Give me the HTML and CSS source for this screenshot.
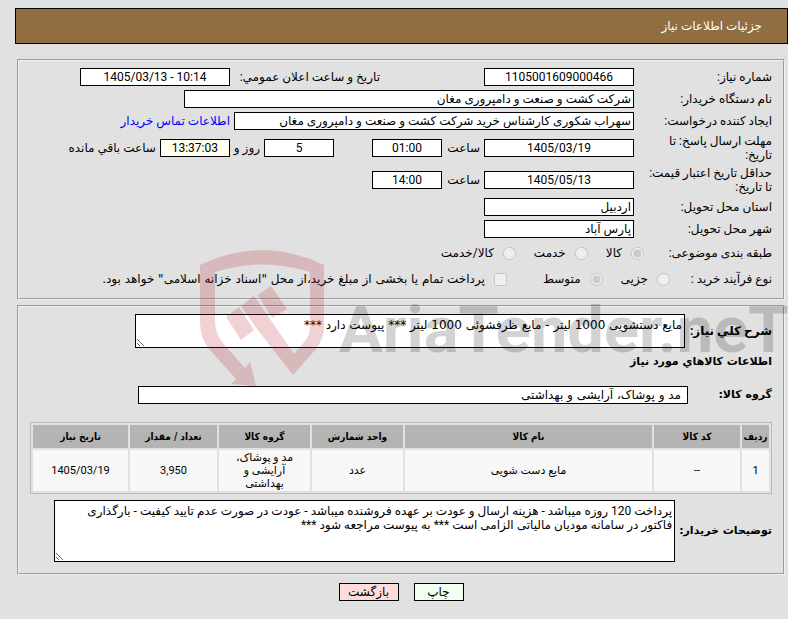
FILE: index.html
```
<!DOCTYPE html>
<html lang="fa" dir="rtl">
<head>
    <meta charset="UTF-8">
    <title>جزئیات اطلاعات نیاز</title>
    <link rel="stylesheet" href="styles.css">
</head>
<body>
    <h1 class="page-title">جزئیات اطلاعات نیاز</h1>

    <form class="need-form">
        <fieldset class="box">
            <div class="row">
                <label class="caption" for="needNo">شماره نیاز:</label>
                <input class="field medium center" type="text" id="needNo" value="1105001609000466" readonly>
                <label class="second-caption" for="announceDate">تاریخ و ساعت اعلان عمومي:</label>
                <input class="field medium center" dir="ltr" type="text" id="announceDate" value="1405/03/13 - 10:14" readonly>
            </div>
            <div class="row">
                <label class="caption" for="buyerOrg">نام دستگاه خریدار:</label>
                <input class="field large" type="text" id="buyerOrg" value="شرکت کشت و صنعت و دامپروری مغان" readonly>
            </div>
            <div class="row">
                <label class="caption" for="creator">ایجاد کننده درخواست:</label>
                <input class="field wide" type="text" id="creator" value="سهراب شکوری کارشناس خرید شرکت کشت و صنعت و دامپروری مغان" readonly>
                <a class="contact" href="#">اطلاعات تماس خریدار</a>
            </div>
            <div class="row double">
                <label class="caption" for="replyDate">مهلت ارسال پاسخ: تا تاریخ:</label>
                <input class="field medium center" type="text" id="replyDate" value="1405/03/19" readonly>
                <label class="hour" for="replyTime">ساعت</label>
                <input class="field small center" type="text" id="replyTime" value="01:00" readonly>
                <input class="field small center days" type="text" id="daysLeft" value="5" readonly>
                <label class="days-caption" for="daysLeft">روز و</label>
                <input class="field small center timer" type="text" id="timeLeft" value="13:37:03" readonly>
                <label for="timeLeft">ساعت باقي مانده</label>
            </div>
            <div class="row double">
                <label class="caption" for="priceDate">حداقل تاریخ اعتبار قیمت: تا تاریخ:</label>
                <input class="field medium center" type="text" id="priceDate" value="1405/05/13" readonly>
                <label class="hour" for="priceTime">ساعت</label>
                <input class="field small center" type="text" id="priceTime" value="14:00" readonly>
            </div>
            <div class="row">
                <label class="caption" for="province">استان محل تحویل:</label>
                <input class="field medium" type="text" id="province" value="اردبیل" readonly>
            </div>
            <div class="row">
                <label class="caption" for="city">شهر محل تحویل:</label>
                <input class="field medium" type="text" id="city" value="پارس آباد" readonly>
            </div>
            <div class="row options">
                <span class="caption subject">طبقه بندی موضوعی:</span>
                <label class="option"><input type="radio" name="subject" checked disabled>کالا</label>
                <label class="option"><input type="radio" name="subject" disabled>خدمت</label>
                <label class="option"><input type="radio" name="subject" disabled>کالا/خدمت</label>
            </div>
            <div class="row options">
                <span class="caption process">نوع فرآیند خرید :</span>
                <label class="option"><input type="radio" name="process" disabled>جزیی</label>
                <label class="option"><input type="radio" name="process" checked disabled>متوسط</label>
                <label class="option treasury"><input type="checkbox" disabled>پرداخت تمام یا بخشی از مبلغ خرید،از محل "اسناد خزانه اسلامی" خواهد بود.</label>
            </div>
        </fieldset>

        <fieldset class="box goods">
            <div class="area-row">
                <label class="summary-caption" for="summary">شرح کلي نیاز:</label>
                <textarea class="field summary" id="summary" readonly>مایع دستشویی 1000 لیتر - مایع ظرفشوئی 1000 لیتر *** پیوست دارد ***</textarea>
            </div>
            <h2 class="subtitle">اطلاعات کالاهاي مورد نیاز</h2>
            <div class="area-row">
                <label class="group-caption" for="goodsGroup">گروه کالا:</label>
                <input class="field group" type="text" id="goodsGroup" value="مد و پوشاک، آرایشی و بهداشتی" readonly>
            </div>
            <table class="items">
                <colgroup>
                    <col class="col-row">
                    <col class="col-code">
                    <col>
                    <col class="col-unit">
                    <col class="col-group">
                    <col class="col-count">
                    <col class="col-date">
                </colgroup>
                <thead>
                    <tr>
                        <th>ردیف</th>
                        <th>کد کالا</th>
                        <th>نام کالا</th>
                        <th>واحد شمارش</th>
                        <th>گروه کالا</th>
                        <th>تعداد / مقدار</th>
                        <th>تاریخ نیاز</th>
                    </tr>
                </thead>
                <tbody>
                    <tr>
                        <td>1</td>
                        <td>--</td>
                        <td>مایع دست شویی</td>
                        <td>عدد</td>
                        <td>مد و پوشاک، آرایشی و بهداشتی</td>
                        <td>3,950</td>
                        <td>1405/03/19</td>
                    </tr>
                </tbody>
            </table>
            <div class="area-row">
                <label for="notes">توضیحات خریدار:</label>
                <textarea class="field notes" id="notes" readonly>پرداخت 120 روزه میباشد - هزینه ارسال و عودت بر عهده فروشنده میباشد - عودت در صورت عدم تایید کیفیت - بارگذاری فاکتور در سامانه مودیان مالیاتی الزامی است *** به پیوست مراجعه شود ***</textarea>
            </div>
        </fieldset>

        <div class="buttons">
            <button class="btn print" type="button">چاپ</button>
            <button class="btn back" type="button">بازگشت</button>
        </div>
    </form>

    <svg class="watermark" width="588" height="140" viewBox="0 0 588 140" direction="ltr">
        <path class="mark" fill-rule="evenodd" d="M0 15 Q62 -15 124 15 V78 Q124 88 116 99 L93 125 L57 79 L70 69 L94 104 L105 91 Q110 85 110 77 V22 Q62 7 15 22 V72 Q15 82 22 92 L45 118 L50 112 L56 136 L31 134 L36 129 L10 100 Q0 89 0 72 Z M26 67 L39 57 L54 80 L41 90 Z M41 56 L54 46 L70 69 L57 79 Z M58 45 L71 36 L87 59 L72 68 Z"/>
        <text class="brand" x="139" y="102">AriaTender.neT</text>
    </svg>
</body>
</html>
```
FILE: styles.css
```
body {
    position: relative;
    margin: 0;
    padding: 8px 0 17px 15px;
    box-sizing: border-box;
    background-color: #e1e1e1;
    color: #000;
    font-family: Roboto, "DejaVu Sans", Tahoma, sans-serif;
    font-size: 12px;
    line-height: 14px;
    overflow-x: hidden;
}

.page-title {
    margin: 0;
    padding: 10px 25px;
    border: 1px solid #000;
    background-color: #906e41;
    color: #fff;
    font-size: 12px;
    font-weight: normal;
    line-height: 14px;
}

.need-form {
    margin: 15px 3px 0 2px;
}

.box {
    margin: 0 0 5px;
    padding: 5px 11px 6px;
    border: 2px groove #f0f0f0;
    min-width: 0;
}

.row {
    display: flex;
    align-items: center;
    gap: 4px;
    height: 22px;
    white-space: nowrap;
}

.row.double {
    height: 32px;
}

.row.options {
    height: 26px;
}

.caption {
    flex: 0 0 134px;
    box-sizing: border-box;
    padding-left: 8px;
    white-space: normal;
}

.caption.subject {
    flex-basis: 124px;
}

.caption.process {
    flex-basis: 98px;
    padding-left: 0;
}

.field {
    box-sizing: border-box;
    height: 18px;
    margin: 0;
    padding: 0 2px;
    border: 1px solid #000;
    border-radius: 0;
    background-color: #fff;
    color: #000;
    font-family: inherit;
    font-size: 12px;
    line-height: 14px;
}

.center {
    text-align: center;
}

.small {
    width: 70px;
}

.medium {
    width: 150px;
}

.wide {
    width: 400px;
}

.large {
    width: 450px;
}

.hour {
    flex: 0 0 34px;
}

.second-caption {
    flex: 0 0 146px;
    margin-right: 100px;
}

.days {
    margin-right: 34px;
}

.days-caption {
    flex: 0 0 26px;
}

.timer {
    background-color: #fffff0;
}

.contact {
    color: #00f;
    text-decoration: none;
}

.option {
    display: flex;
    align-items: center;
    gap: 9px;
    margin-left: 14px;
}

.option input {
    width: 13px;
    height: 13px;
    margin: 0;
}

.treasury {
    margin-right: 18px;
}

.treasury,
.field.summary,
.field.group {
    font-family: "DejaVu Sans", Tahoma, sans-serif;
}

/* goods section */
.goods {
    padding: 7px 11px 11px;
}

.area-row {
    display: flex;
    align-items: center;
    gap: 4px;
}

.area-row label,
.subtitle {
    font-family: "DejaVu Sans", Tahoma, sans-serif;
    font-size: 11px;
    font-weight: bold;
    white-space: nowrap;
}

.subtitle {
    margin: 7px 0 17px;
    line-height: 14px;
}

.area-row .summary-caption {
    flex: 0 0 83px;
    font-family: Roboto, "DejaVu Sans", Tahoma, sans-serif;
    font-size: 12px;
}

.group-caption {
    flex: 0 0 80px;
}

.group {
    width: 550px;
    padding-right: 6px;
}

textarea.field {
    resize: both;
    overflow: hidden;
}

.summary {
    width: 550px;
    height: 34px;
    padding: 3px 2px;
}

.notes {
    width: 621px;
    height: 62px;
    padding: 3px 2px;
}

.items {
    width: 100%;
    margin: 18px 0 6px;
    border: 1px solid #bbb;
    border-collapse: separate;
    border-spacing: 2px;
    table-layout: fixed;
    font-size: 11px;
    line-height: 13px;
    text-align: center;
}

.items th {
    height: 23px;
    padding: 0;
    background-color: #b4b4b4;
    font-family: "DejaVu Sans Condensed", Tahoma, sans-serif;
    font-size: 10px;
}

.items td {
    height: 41px;
    padding: 0 10px;
    background-color: #f7f7f7;
}

.items th:first-child,
.items td:first-child {
    padding: 0;
}

.col-row {
    width: 27px;
}

.col-code {
    width: 86px;
}

.col-unit {
    width: 91px;
}

.col-group {
    width: 91px;
}

.col-count {
    width: 87px;
}

.col-date {
    width: 95px;
}

.buttons {
    display: flex;
    justify-content: center;
    gap: 15px;
    margin-top: 8px;
}

.btn {
    height: 18px;
    padding: 0;
    border: 1px solid #000;
    border-radius: 0;
    color: #000;
    font-family: inherit;
    font-size: 12px;
    line-height: 14px;
}

.print {
    width: 50px;
    background-color: #f0fff0;
}

.back {
    width: 60px;
    background-color: #ffdcdc;
}

/* site mark over the form */
.watermark {
    position: absolute;
    top: 250px;
    left: 200px;
    pointer-events: none;
}

.mark {
    fill: #b40f19;
    opacity: 0.19;
}

.brand {
    fill: #000;
    opacity: 0.17;
    font-family: Roboto, sans-serif;
    font-size: 65px;
    font-weight: bold;
}
```
